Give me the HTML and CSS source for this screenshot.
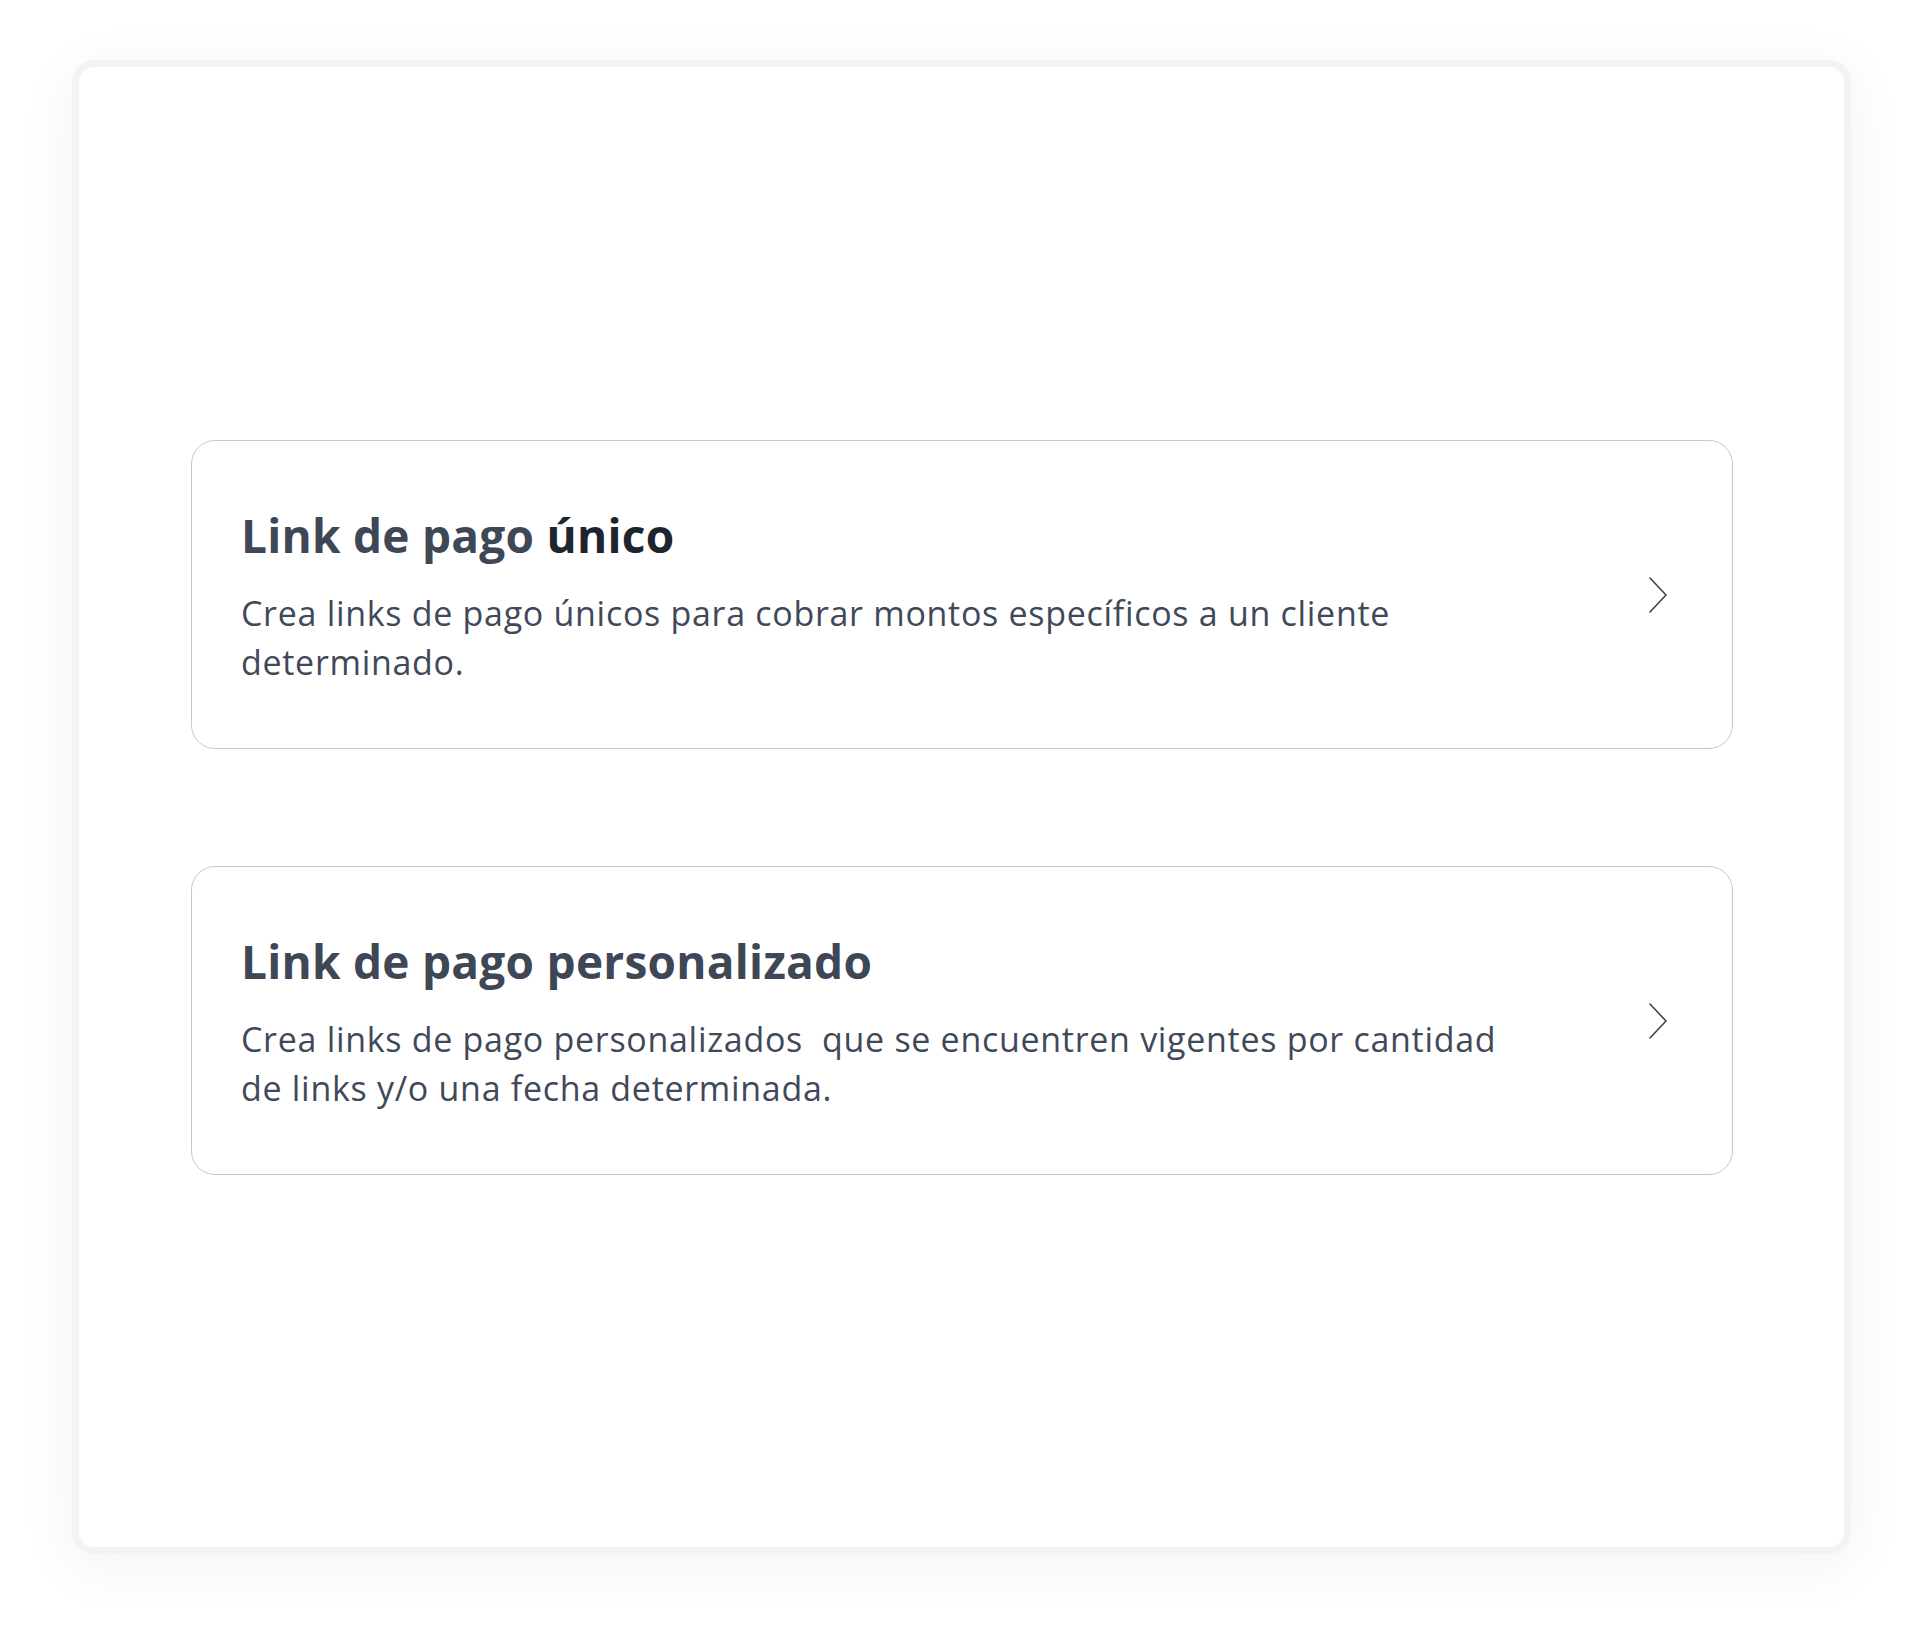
FILE: index.html
```html
<!DOCTYPE html>
<html lang="es">
<head>
<meta charset="utf-8">
<title>Links de pago</title>
<link rel="stylesheet" href="styles.css">
</head>
<body>
<main class="panel">
  <section class="options">
    <a class="option-card" href="#">
      <div class="option-text">
        <h2 class="option-title">Link de pago <span class="strong">único</span></h2>
        <p class="option-desc">Crea links de pago únicos para cobrar montos específicos a un cliente determinado.</p>
      </div>
      <svg class="chevron" width="20" height="38" viewBox="0 0 20 38" aria-hidden="true">
        <polyline points="2,2 18,19 2,36" fill="none" stroke="#3b4453" stroke-width="1.6" stroke-linecap="round" stroke-linejoin="round"/>
      </svg>
    </a>
    <a class="option-card" href="#">
      <div class="option-text">
        <h2 class="option-title">Link de pago personalizado</h2>
        <p class="option-desc">Crea links de pago personalizados&nbsp; que se encuentren vigentes por cantidad de links y/o una fecha determinada.</p>
      </div>
      <svg class="chevron" width="20" height="38" viewBox="0 0 20 38" aria-hidden="true">
        <polyline points="2,2 18,19 2,36" fill="none" stroke="#3b4453" stroke-width="1.6" stroke-linecap="round" stroke-linejoin="round"/>
      </svg>
    </a>
  </section>
</main>
</body>
</html>
```

FILE: styles.css
```css
* {
  box-sizing: border-box;
}

html, body {
  margin: 0;
  padding: 0;
  background: #ffffff;
}

body {
  font-family: "Open Sans", "Lato", "Liberation Sans", sans-serif;
  color: #3e4756;
  padding: 60px 0 0 72px;
  min-height: 1638px;
}

.panel {
  width: 1779px;
  height: 1494px;
  background: #ffffff;
  border: 7px solid #f2f3f6;
  border-radius: 22px;
  box-shadow: 0 12px 60px rgba(30, 41, 59, 0.06);
  padding: 373px 111px 0 112px;
}

.options {
  display: flex;
  flex-direction: column;
  gap: 117px;
}

.option-card {
  display: flex;
  align-items: center;
  justify-content: space-between;
  height: 309px;
  padding: 0 64px 0 49px;
  border: 1.5px solid #c3c9d3;
  border-radius: 24px;
  text-decoration: none;
  color: inherit;
  background: #ffffff;
}

.option-text {
  flex: 0 1 1290px;
  padding-top: 4px;
}

.option-title {
  margin: 0 0 25px 0;
  font-size: 46px;
  font-weight: 700;
  line-height: 58px;
  color: #3e4756;
  letter-spacing: 0.25px;
}

.option-title .strong {
  color: #1f252e;
}

.option-desc {
  margin: 0;
  font-size: 34px;
  font-weight: 400;
  line-height: 49px;
  color: #3f4959;
  letter-spacing: 0.7px;
}

.chevron {
  flex: none;
  display: block;
}
```
